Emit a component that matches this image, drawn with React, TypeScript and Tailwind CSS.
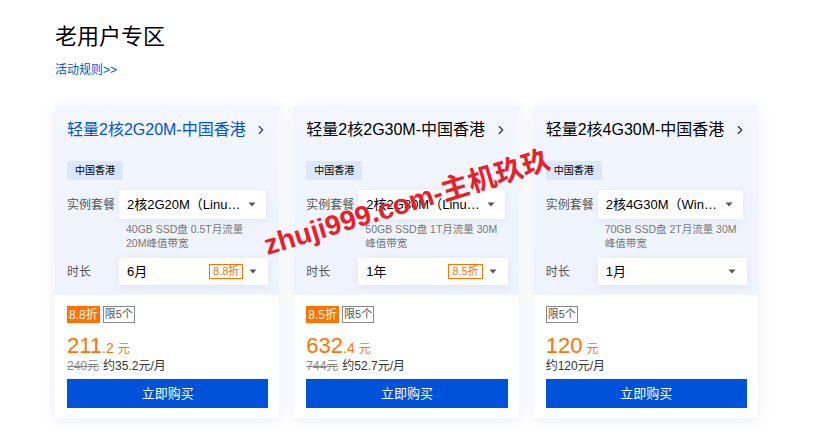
import { ChevronRight } from 'lucide-react';

const plans = [
  {
    title: '轻量2核2G20M-中国香港',
    active: true,
    spec: '2核2G20M（Linux）',
    specWidth: 'w-[147px]',
    desc: '40GB SSD盘 0.5T月流量 20M峰值带宽',
    duration: '6月',
    discount: '8.8折',
    price: '211',
    decimal: '.2',
    original: '240元',
    monthly: '约35.2元/月',
  },
  {
    title: '轻量2核2G30M-中国香港',
    active: false,
    spec: '2核2G30M（Linux）',
    specWidth: 'w-[147px]',
    desc: '50GB SSD盘 1T月流量 30M峰值带宽',
    duration: '1年',
    discount: '8.5折',
    price: '632',
    decimal: '.4',
    original: '744元',
    monthly: '约52.7元/月',
  },
  {
    title: '轻量2核4G30M-中国香港',
    active: false,
    spec: '2核4G30M（Windows）',
    specWidth: 'w-[145px]',
    desc: '70GB SSD盘 2T月流量 30M峰值带宽',
    duration: '1月',
    discount: null,
    price: '120',
    decimal: '',
    original: null,
    monthly: '约120元/月',
  },
];

function Caret() {
  return (
    <svg width="8" height="5" viewBox="0 0 8 5" className="shrink-0">
      <path d="M0.5 0.5 L7.5 0.5 L4 4.5 Z" fill="#555" />
    </svg>
  );
}

type Plan = (typeof plans)[number];

function PlanCard({ plan }: { plan: Plan }) {
  return (
    <div className="bg-white shadow-[0_2px_14px_rgba(30,60,140,0.09)]">
      {/* Upper config area */}
      <div className="bg-gradient-to-b from-[#f3f6fc] to-[#eef3fd] pl-3 pr-[11px] pt-3 pb-[10px]">
        <div className="flex items-center justify-between h-6">
          <span
            className={`text-[16px] leading-6 ${plan.active ? 'text-[#0052d9]' : 'text-[#000]'}`}
          >
            {plan.title}
          </span>
          <ChevronRight
            size={14}
            strokeWidth={2}
            className={plan.active ? 'text-[#2a3f75]' : 'text-[#333]'}
          />
        </div>

        <div className="mt-[19px] inline-flex h-[19px] items-center bg-[#dce7fc] px-2 text-[10px] text-[#000]">
          中国香港
        </div>

        <div className="mt-[9px] flex">
          <span className="w-[52px] pt-[7px] text-[12px] leading-4 text-[#555]">实例套餐</span>
          <div>
            <div
              className={`${plan.specWidth} flex h-[29px] items-center justify-between bg-white pl-2 pr-[10px] shadow-[0_2px_8px_rgba(30,60,140,0.07)]`}
            >
              <span className="truncate pr-[6px] text-[13px] text-[#000]">{plan.spec}</span>
              <Caret />
            </div>
            <p className="mt-[3px] w-[140px] pl-[7px] text-[10.5px] leading-[14px] text-[#777]">
              {plan.desc}
            </p>
          </div>
        </div>

        <div className="mt-[8px] flex items-center">
          <span className="w-[52px] text-[12px] leading-4 text-[#555]">时长</span>
          <div className="flex h-[27px] flex-1 items-center bg-white pl-2 pr-[11px] shadow-[0_2px_8px_rgba(30,60,140,0.07)]">
            <span className="flex-1 text-[13px] text-[#000]">{plan.duration}</span>
            {plan.discount && (
              <span className="mr-[6px] flex h-[15px] items-center border border-[#ff7200] px-[3px] text-[11px] text-[#ff7200]">
                {plan.discount}
              </span>
            )}
            <Caret />
          </div>
        </div>
      </div>

      {/* Lower price area */}
      <div className="pl-3 pr-[11px] pt-[11px] pb-[10px]">
        <div className="flex h-[17px] gap-[3px]">
          {plan.discount && (
            <span className="flex items-center bg-[#ff7200] px-[2px] text-[12px] text-white">
              {plan.discount}
            </span>
          )}
          <span className="flex items-center border border-[#888] px-[1px] text-[11px] text-[#555]">
            限5个
          </span>
        </div>

        <div className="mt-[6px] flex h-[28px] items-baseline text-[#ff7200]">
          <span className="text-[22px]">{plan.price}</span>
          <span className="text-[14px]">{plan.decimal}</span>
          <span className="ml-[4px] text-[12px]">元</span>
        </div>

        <div className="flex h-[18px] items-center gap-[4px] text-[12px]">
          {plan.original && <span className="text-[#888] line-through">{plan.original}</span>}
          <span className="text-[#333]">{plan.monthly}</span>
        </div>

        <button className="mt-[4px] flex h-[29px] w-full items-center justify-center bg-[#0052d9] text-[13px] text-white">
          立即购买
        </button>
      </div>
    </div>
  );
}

export default function App() {
  return (
    <div className="relative h-[447px] w-[824px] overflow-hidden bg-white font-['Liberation_Sans','Noto_Sans_CJK_SC',sans-serif]">
      <div className="pl-[55px] pt-[22px]">
        <h1 className="text-[22px] leading-[30px] text-[#000]">老用户专区</h1>
        <a className="mt-[10px] block text-[12px] leading-4 text-[#0052d9]">活动规则&gt;&gt;</a>

        <div className="mt-[28px] grid w-[703px] grid-cols-3 gap-[15px]">
          {plans.map((plan, i) => (
            <PlanCard key={i} plan={plan} />
          ))}
        </div>
      </div>

      {/* Watermark */}
      <div className="pointer-events-none absolute left-[407px] top-[203px] -translate-x-1/2 -translate-y-1/2 -rotate-[17deg] whitespace-nowrap text-[28px] font-bold text-[#e8202a]">
        zhuji999.com-主机玖玖
      </div>
    </div>
  );
}
